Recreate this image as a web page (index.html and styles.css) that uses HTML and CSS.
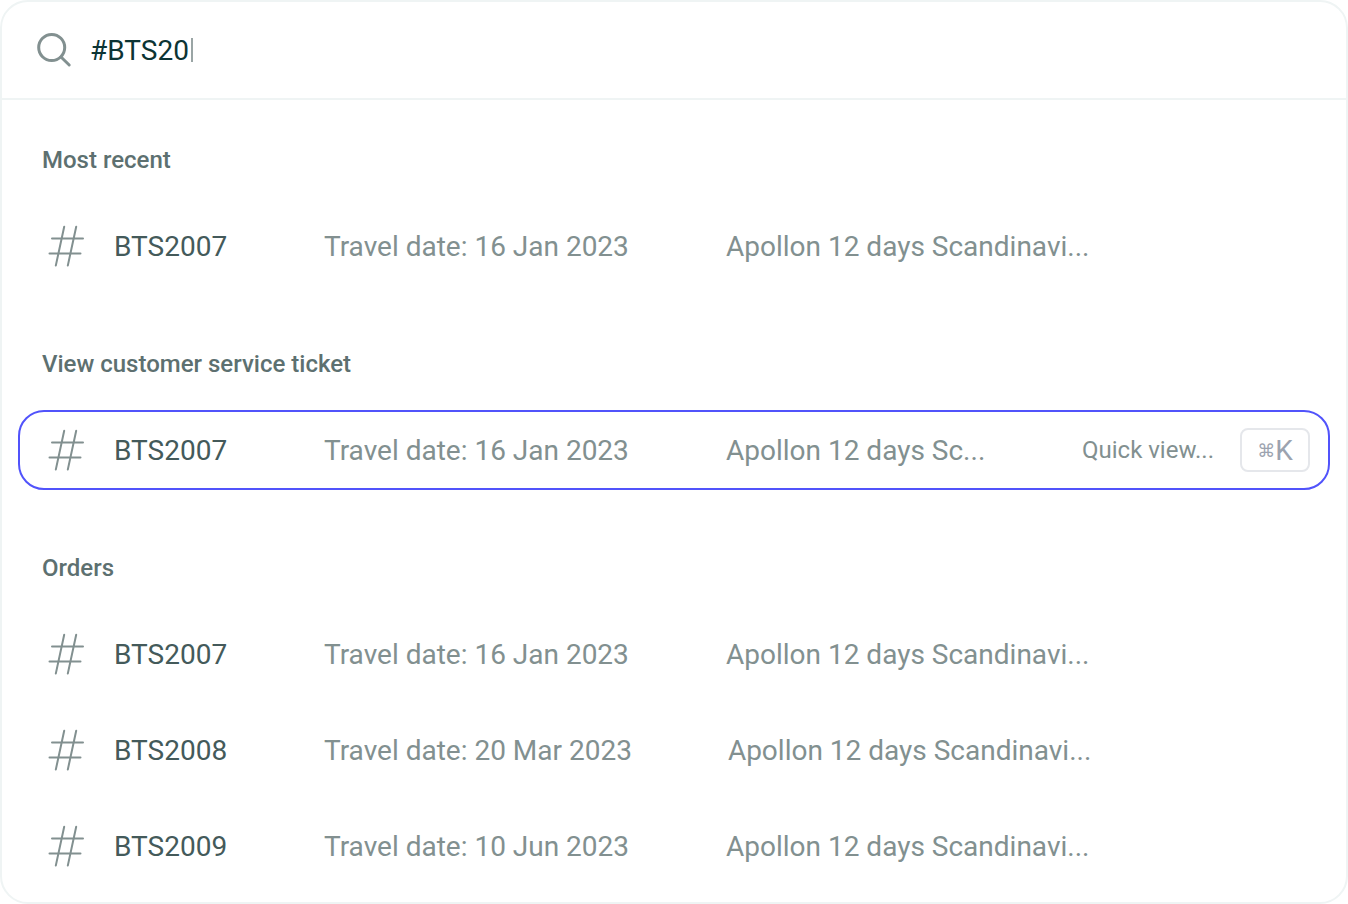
FILE: index.html
```html
<!DOCTYPE html>
<html lang="en">
<head>
<meta charset="utf-8">
<meta name="viewport" content="width=device-width, initial-scale=1">
<title>Search</title>
<link rel="stylesheet" href="styles.css">
</head>
<body>
<svg class="sprite" aria-hidden="true">
  <symbol id="hash" viewBox="0 0 48 48">
    <path d="M22.2 4.8 13.8 43.600M34.2 4.8 25.8 43.600M10 16.500h31M7.500 31.500h31" />
  </symbol>
</svg>
<main class="palette">
  <form class="search" role="search">
    <svg class="search-icon" viewBox="0 0 36 36" aria-hidden="true">
      <circle cx="15.700" cy="15.500" r="13" />
      <path d="m25 25 8.200 8" />
    </svg>
    <input class="search-input" type="text" aria-label="Search" value="#BTS20" size="6">
    <span class="caret"></span>
  </form>
  <div class="results">
    <section class="group">
      <h2 class="group-title">Most recent</h2>
      <ul class="list">
        <li class="row">
          <a class="item" href="#bts2007">
            <svg class="hash" aria-hidden="true"><use href="#hash" /></svg>
            <span class="code">BTS2007</span>
            <span class="date">Travel date: 16 Jan 2023</span>
            <span class="trip">Apollon 12 days Scandinavi...</span>
          </a>
        </li>
      </ul>
    </section>
    <section class="group">
      <h2 class="group-title">View customer service ticket</h2>
      <ul class="list">
        <li class="row row-active">
          <a class="item" href="#ticket-bts2007">
            <svg class="hash" aria-hidden="true"><use href="#hash" /></svg>
            <span class="code">BTS2007</span>
            <span class="date">Travel date: 16 Jan 2023</span>
            <span class="trip">Apollon 12 days Sc...</span>
          </a>
          <button class="quick" type="button">Quick view... <kbd class="key"><span class="cmd">⌘</span>K</kbd></button>
        </li>
      </ul>
    </section>
    <section class="group">
      <h2 class="group-title">Orders</h2>
      <ul class="list">
        <li class="row">
          <a class="item" href="#order-bts2007">
            <svg class="hash" aria-hidden="true"><use href="#hash" /></svg>
            <span class="code">BTS2007</span>
            <span class="date">Travel date: 16 Jan 2023</span>
            <span class="trip">Apollon 12 days Scandinavi...</span>
          </a>
        </li>
        <li class="row">
          <a class="item" href="#order-bts2008">
            <svg class="hash" aria-hidden="true"><use href="#hash" /></svg>
            <span class="code">BTS2008</span>
            <span class="date">Travel date: 20 Mar 2023</span>
            <span class="trip">Apollon 12 days Scandinavi...</span>
          </a>
        </li>
        <li class="row">
          <a class="item" href="#order-bts2009">
            <svg class="hash" aria-hidden="true"><use href="#hash" /></svg>
            <span class="code">BTS2009</span>
            <span class="date">Travel date: 10 Jun 2023</span>
            <span class="trip">Apollon 12 days Scandinavi...</span>
          </a>
        </li>
      </ul>
    </section>
  </div>
</main>
</body>
</html>
```
FILE: styles.css
```css
* {
  box-sizing: border-box;
}

body {
  margin: 0;
  background: #fff;
  font-family: Roboto, "Liberation Sans", sans-serif;
  font-size: 28px;
  line-height: 33px;
  color: #829090;
}

.sprite {
  display: none;
}

.palette {
  border: 2px solid #eff4f4;
  border-radius: 28px;
  background: #fff;
}

.search {
  display: flex;
  align-items: center;
  min-height: 98px;
  padding: 0 34px;
  border-bottom: 2px solid #eff4f4;
}

.search-icon {
  flex: none;
  width: 36px;
  height: 36px;
  margin-right: 18px;
  fill: none;
  stroke: #829090;
  stroke-width: 3;
  stroke-linecap: round;
}

.search-input {
  field-sizing: content;
  height: 33px;
  padding: 0 2px 0 0;
  border: 0;
  outline: 0;
  background: none;
  font: inherit;
  color: #0c3434;
}

.caret {
  width: 2px;
  height: 24px;
  background: #9aa5a5;
}

.results {
  display: flex;
  flex-direction: column;
  gap: 64px;
  padding: 46px 16px 16px;
}

.group-title {
  margin: 0 24px 32px;
  font-size: 24px;
  font-weight: 500;
  line-height: 28px;
  color: #5d7070;
}

.list {
  display: flex;
  flex-direction: column;
  gap: 16px;
  margin: 0;
  padding: 0;
  list-style: none;
}

.row {
  display: flex;
  align-items: center;
  min-height: 80px;
  padding: 0 18px 0 22px;
  border: 2px solid transparent;
  border-radius: 26px;
}

.row-active {
  border-color: #5153fb;
}

.item {
  display: flex;
  flex: 1;
  align-items: center;
  color: inherit;
  text-decoration: none;
  white-space: nowrap;
}

.hash {
  flex: none;
  width: 48px;
  height: 48px;
  margin-right: 24px;
  fill: none;
  stroke: #829090;
  stroke-width: 2;
  stroke-linecap: round;
}

.code {
  min-width: 114px;
  margin-right: 96px;
  color: #445a5a;
}

.date {
  min-width: 306px;
  margin-right: 96px;
}

.quick {
  display: flex;
  align-items: center;
  gap: 26px;
  padding: 0;
  border: 0;
  background: none;
  font: inherit;
  font-size: 24px;
  color: inherit;
  white-space: nowrap;
}

.key {
  display: flex;
  align-items: center;
  justify-content: center;
  width: 70px;
  height: 44px;
  border: 2px solid #e5e7eb;
  border-radius: 8px;
  font-family: inherit;
  font-size: 28px;
  color: #9ca3af;
}

.cmd {
  font-family: "DejaVu Sans", sans-serif;
  font-size: 18px;
}
```
